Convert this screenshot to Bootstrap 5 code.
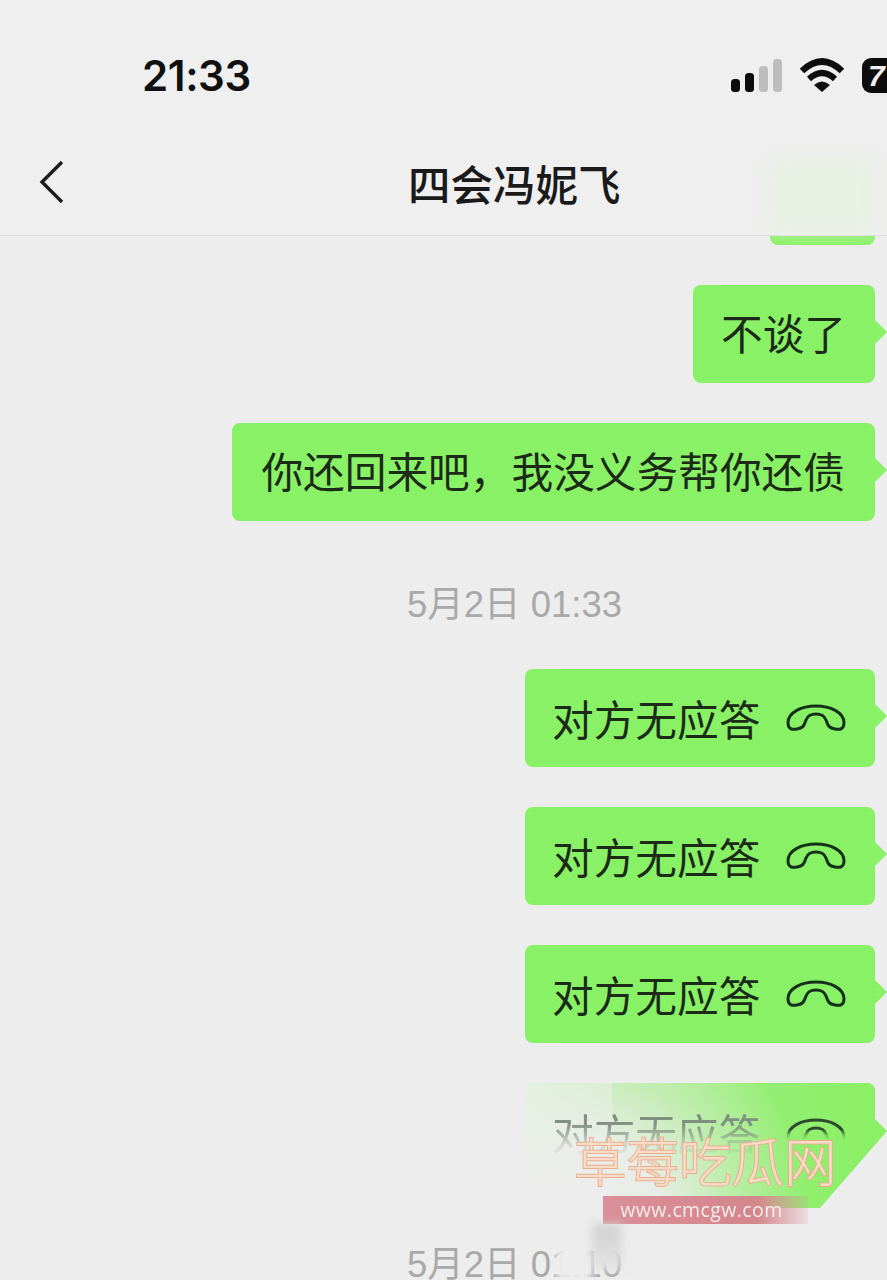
<!DOCTYPE html>
<html lang="zh">
<head>
  <meta charset="UTF-8">
  <title>四会冯妮飞</title>
  <meta name="viewport" content="width=device-width, initial-scale=1">
  <link href="https://cdn.jsdelivr.net/npm/bootstrap@5.3.2/dist/css/bootstrap.min.css" rel="stylesheet">
  <style>
    html, body { height: 1280px; overflow: hidden; }
    body { background: #ededed; color: #191919; font-family: "Noto Sans CJK SC", "Liberation Sans", sans-serif; }
    .phone { width: 887px; height: 1280px; overflow: hidden; }

    .top-head { height: 236px; background: #efefef; border-bottom: 1px solid #dcdcdc; position: relative; z-index: 2; }
    .status-row { height: 135px; padding-left: 142px; padding-top: 51px; }
    .clock { font-family: Inter, "Liberation Sans", sans-serif; font-size: 42px; line-height: 50px; font-weight: 600; color: #111; letter-spacing: -.4px; }
    .status-icons { position: absolute; left: 730px; top: 58px; width: 157px; height: 36px; overflow: hidden; }
    .batt { position: absolute; left: 132px; top: 0; width: 40px; height: 35px; background: #0d0d0d; border-radius: 9px; color: #eee; font: 700 30px/35px "Liberation Sans", sans-serif; padding-left: 6px; font-style: italic; }
    .title-row { height: 100px; position: relative; }
    .back-btn { position: absolute; left: 38px; top: 26px; }
    .chat-title { padding-left: 408px; font-size: 42.5px; font-weight: 500; line-height: 100px; margin-top: -2px; color: #1a1a1a; white-space: nowrap; }
    .head-smudge { position: absolute; left: 770px; top: 160px; width: 105px; height: 70px; background: #e8f1e3; filter: blur(10px); }

    .msgs { padding-right: 12px; }
    .bubble { height: 98px; background: #89f165; border-radius: 8px; font-size: 41.7px; line-height: 95px; padding: 0 30px 0 29px; position: relative; white-space: nowrap; color: #1c2a18; }
    .bubble::after { content: ""; position: absolute; right: -12px; top: 35px; border-left: 12px solid #89f165; border-top: 12px solid transparent; border-bottom: 12px solid transparent; }
    .bubble-cut { width: 105px; height: 9px; background: #89f165; border-radius: 0 0 8px 8px; }
    .gap-40 { margin-top: 40px; }
    .short-msg { width: 182px; padding-left: 28px; }
    .call-msg { width: 350px; padding-left: 27px; padding-right: 28px; }
    .time-tag { font-size: 36.5px; line-height: 50px; color: #a9a9a9; padding-left: 407px; padding-top: 11px; margin-bottom: -1px; white-space: nowrap; font-family: "Liberation Sans", "Noto Sans CJK SC", sans-serif; }

    .bubble-faded { background: transparent; color: #7f8f80; }
    .bubble-faded::after { display: none; }
    .bubble-faded > span, .bubble-faded > svg { position: relative; -webkit-mask-image: linear-gradient(180deg, #000 40%, rgba(0,0,0,.25) 62%, transparent 78%); mask-image: linear-gradient(180deg, #000 40%, rgba(0,0,0,.25) 62%, transparent 78%); }
    .green-shape { position: absolute; left: 0; top: 0; width: 362px; height: 125px; clip-path: polygon(4px 0, 344px 0, 348px 2px, 350px 6px, 350px 36px, 362px 48px, 295px 125px, 87px 125px, 87px 98px, 0 98px, 0 4px); background: radial-gradient(circle 210px at 70px 125px, rgba(237,237,237,.95) 30%, rgba(237,237,237,.45) 62%, rgba(237,237,237,0) 100%), linear-gradient(90deg, #e0f3d8 0, #c8f0b8 87px, #a6ec8c 88px, #88f062 100%); }
    .mark-text { position: absolute; left: 574px; top: 1131px; font-size: 52.5px; line-height: 56px; color: #f9dcc8; -webkit-text-stroke: 2px #e8ae8e; paint-order: stroke fill; white-space: nowrap; font-weight: 300; z-index: 3; }
    .mark-band { position: absolute; left: 603px; top: 1196px; width: 205px; height: 28px; background: linear-gradient(90deg, #db8f98, #d4868d 75%, rgba(217,138,146,.15)); color: #f6ecec; font: 19.5px/28px "Open Sans", sans-serif; text-align: center; letter-spacing: .4px; padding-right: 8px; z-index: 3; filter: blur(.4px); }
    .mark-smudge { position: absolute; left: 592px; top: 1224px; width: 30px; height: 46px; background: linear-gradient(180deg, #cfcfcf, #e4e4e4); filter: blur(5px); z-index: 3; }
    .mark-wipe { position: absolute; left: 556px; top: 1248px; width: 36px; height: 32px; background: #ededed; filter: blur(3px); z-index: 3; }
  </style>
</head>
<body>
<div class="phone position-relative">
  <div class="top-head">
    <div class="head-smudge"></div>
    <div class="status-row">
      <span class="clock">21:33</span>
      <div class="status-icons">
        <svg width="130" height="36" viewBox="0 0 130 36" xmlns="http://www.w3.org/2000/svg">
          <rect x="1" y="21" width="9" height="13" rx="3.5" fill="#0c0c0c"/>
          <rect x="15" y="15" width="9" height="19" rx="3.5" fill="#0c0c0c"/>
          <rect x="29" y="8" width="9" height="26" rx="3.5" fill="#bdbdbd"/>
          <rect x="43" y="1" width="9" height="33" rx="3.5" fill="#bdbdbd"/>
          <path d="M72 13 Q92 -6 112 13" fill="none" stroke="#0c0c0c" stroke-width="6.5"/>
          <path d="M79 21 Q92 9 105 21" fill="none" stroke="#0c0c0c" stroke-width="6"/>
          <path d="M84 27 Q92 20 100 27 L92 34 Z" fill="#0c0c0c"/>
        </svg>
        <div class="batt">7</div>
      </div>
    </div>
    <div class="title-row">
      <svg class="back-btn" width="28" height="46" viewBox="0 0 28 46" xmlns="http://www.w3.org/2000/svg">
        <path d="M24 3 L4 23 L24 43" fill="none" stroke="#1c1c1c" stroke-width="3.4"/>
      </svg>
      <div class="chat-title">四会冯妮飞</div>
    </div>
  </div>

  <div class="msgs d-flex flex-column align-items-end">
    <div class="bubble-cut"></div>
    <div class="bubble short-msg gap-40">不谈了</div>
    <div class="bubble gap-40">你还回来吧，我没义务帮你还债</div>
    <div class="time-tag w-100 mt-5">5月2日 01:33</div>
    <div class="bubble call-msg gap-40 d-flex justify-content-between align-items-center">对方无应答
      <svg width="62" height="28" viewBox="0 0 62 28" xmlns="http://www.w3.org/2000/svg"><path d="M3 19 C3 8 17 2 31 2 C45 2 59 8 59 19 C59 25 55 26 50 25 C44 24 43 22 41 16 C39 11 36 10 31 10 C26 10 23 11 21 16 C19 22 18 24 12 25 C7 26 3 25 3 19 Z" fill="none" stroke="#15301a" stroke-width="3"/></svg>
    </div>
    <div class="bubble call-msg gap-40 d-flex justify-content-between align-items-center">对方无应答
      <svg width="62" height="28" viewBox="0 0 62 28" xmlns="http://www.w3.org/2000/svg"><path d="M3 19 C3 8 17 2 31 2 C45 2 59 8 59 19 C59 25 55 26 50 25 C44 24 43 22 41 16 C39 11 36 10 31 10 C26 10 23 11 21 16 C19 22 18 24 12 25 C7 26 3 25 3 19 Z" fill="none" stroke="#15301a" stroke-width="3"/></svg>
    </div>
    <div class="bubble call-msg gap-40 d-flex justify-content-between align-items-center">对方无应答
      <svg width="62" height="28" viewBox="0 0 62 28" xmlns="http://www.w3.org/2000/svg"><path d="M3 19 C3 8 17 2 31 2 C45 2 59 8 59 19 C59 25 55 26 50 25 C44 24 43 22 41 16 C39 11 36 10 31 10 C26 10 23 11 21 16 C19 22 18 24 12 25 C7 26 3 25 3 19 Z" fill="none" stroke="#15301a" stroke-width="3"/></svg>
    </div>
    <div class="bubble bubble-faded call-msg gap-40 d-flex justify-content-between align-items-center">
      <div class="green-shape"></div>
      <span>对方无应答</span>
      <svg width="62" height="28" viewBox="0 0 62 28" xmlns="http://www.w3.org/2000/svg"><path d="M3 19 C3 8 17 2 31 2 C45 2 59 8 59 19 C59 25 55 26 50 25 C44 24 43 22 41 16 C39 11 36 10 31 10 C26 10 23 11 21 16 C19 22 18 24 12 25 C7 26 3 25 3 19 Z" fill="none" stroke="#2c4a2e" stroke-width="3"/></svg>
    </div>
    <div class="time-tag w-100 mt-5">5月2日 01:10</div>
  </div>

  <div class="mark-text">草莓吃瓜网</div>
  <div class="mark-band">www.cmcgw.com</div>
  <div class="mark-wipe"></div>
  <div class="mark-smudge"></div>
</div>
<script src="https://cdn.jsdelivr.net/npm/bootstrap@5.3.2/dist/js/bootstrap.bundle.min.js"></script>
</body>
</html>
